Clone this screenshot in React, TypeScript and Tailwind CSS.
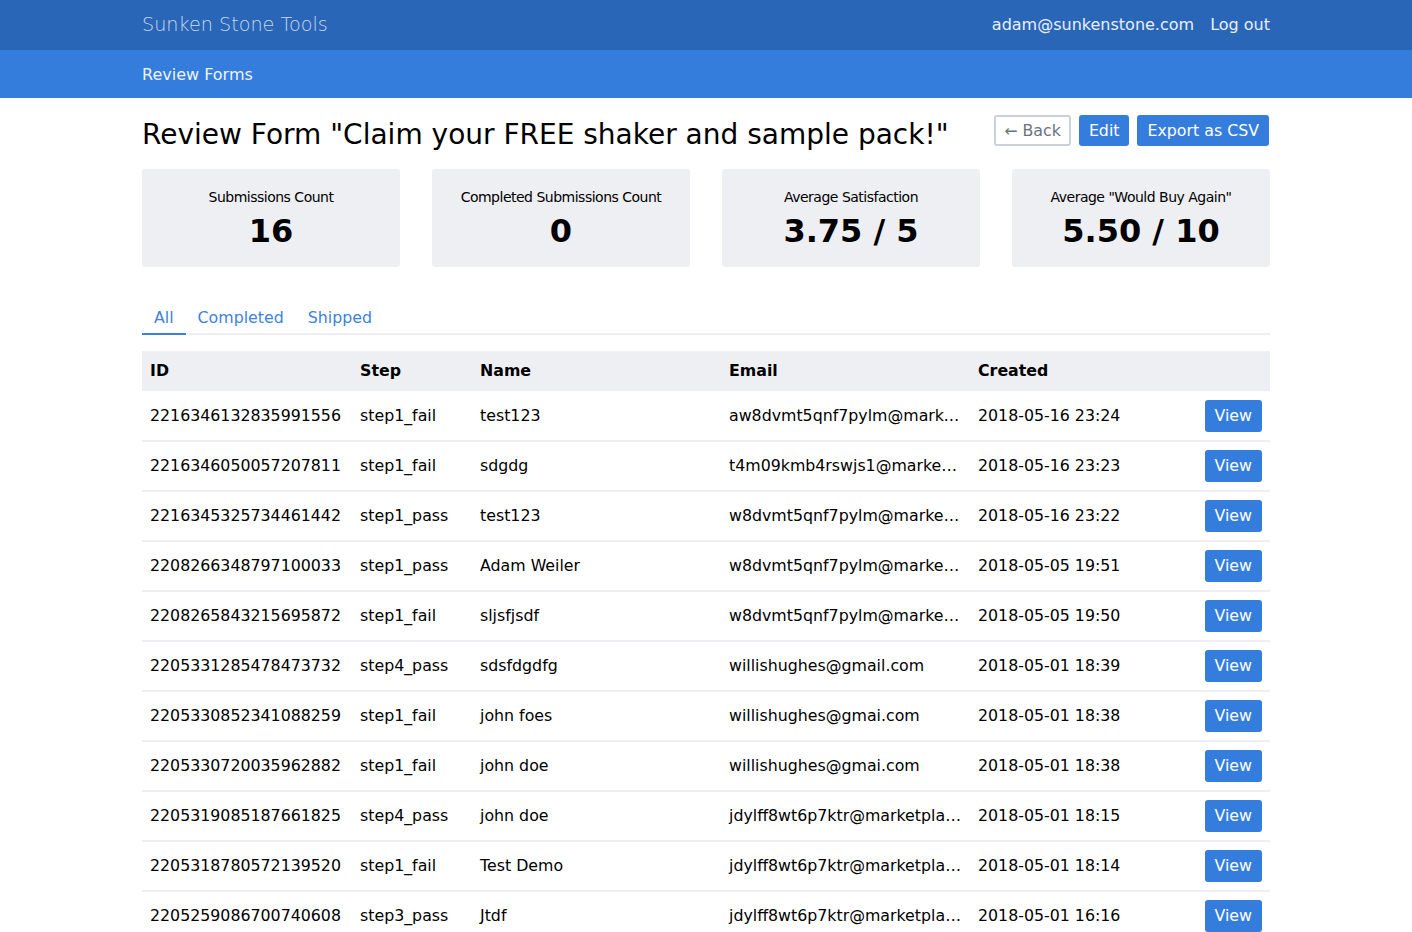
import React from "react";

const rows = [
  ["2216346132835991556", "step1_fail", "test123", "aw8dvmt5qnf7pylm@marketplace.amazon.com", "2018-05-16 23:24"],
  ["2216346050057207811", "step1_fail", "sdgdg", "t4m09kmb4rswjs1@marketplace.amazon.com", "2018-05-16 23:23"],
  ["2216345325734461442", "step1_pass", "test123", "w8dvmt5qnf7pylm@marketplace.amazon.com", "2018-05-16 23:22"],
  ["2208266348797100033", "step1_pass", "Adam Weiler", "w8dvmt5qnf7pylm@marketplace.amazon.com", "2018-05-05 19:51"],
  ["2208265843215695872", "step1_fail", "sljsfjsdf", "w8dvmt5qnf7pylm@marketplace.amazon.com", "2018-05-05 19:50"],
  ["2205331285478473732", "step4_pass", "sdsfdgdfg", "willishughes@gmail.com", "2018-05-01 18:39"],
  ["2205330852341088259", "step1_fail", "john foes", "willishughes@gmai.com", "2018-05-01 18:38"],
  ["2205330720035962882", "step1_fail", "john doe", "willishughes@gmai.com", "2018-05-01 18:38"],
  ["2205319085187661825", "step4_pass", "john doe", "jdylff8wt6p7ktr@marketplace.amazon.com", "2018-05-01 18:15"],
  ["2205318780572139520", "step1_fail", "Test Demo", "jdylff8wt6p7ktr@marketplace.amazon.com", "2018-05-01 18:14"],
  ["2205259086700740608", "step3_pass", "Jtdf", "jdylff8wt6p7ktr@marketplace.amazon.com", "2018-05-01 16:16"],
];

const stats = [
  ["Submissions Count", "16"],
  ["Completed Submissions Count", "0"],
  ["Average Satisfaction", "3.75 / 5"],
  ['Average "Would Buy Again"', "5.50 / 10"],
];

export default function App() {
  return (
    <div className="min-h-screen bg-white text-black" style={{ fontFamily: '"DejaVu Sans", sans-serif' }}>
      <div className="bg-[#2a66b8] h-[50px]">
        <div className="w-[1128px] mx-auto h-full flex items-center justify-between">
          <div className="text-[19.2px] text-[#c6d7ef] font-light">Sunken Stone Tools</div>
          <div className="flex items-center gap-4 text-[16px] text-[#e9eff9]">
            <span>adam@sunkenstone.com</span>
            <span>Log out</span>
          </div>
        </div>
      </div>
      <div className="bg-[#347ddd] h-[48px]">
        <div className="w-[1128px] mx-auto h-full flex items-center text-[16px] text-[#eef3fb] pt-[2px]">Review Forms</div>
      </div>
      <div className="w-[1128px] mx-auto">
        <div className="flex items-start justify-between pt-[19px]">
          <h1 className="text-[28px] leading-[36px]">Review Form "Claim your FREE shaker and sample pack!"</h1>
          <div className="flex gap-[8px] mt-[-2px] mr-[1px]">
            <button className="h-[31px] px-[8px] border-2 border-[#c9d1da] rounded-[3px] text-[#6a7480] text-[15.8px]">← Back</button>
            <button className="h-[31px] px-[10px] rounded-[3px] bg-[#357ddd] text-white text-[15.8px]">Edit</button>
            <button className="h-[31px] px-[10px] rounded-[3px] bg-[#357ddd] text-white text-[15.8px]">Export as CSV</button>
          </div>
        </div>
        <div className="grid grid-cols-4 gap-[32px] mt-[16px]">
          {stats.map(([l, v]) => (
            <div key={l} className="bg-[#eeeff3] rounded-[3px] h-[98px] flex flex-col items-center pt-[19px]">
              <div className="text-[14px] leading-[18px] tracking-[-0.5px]">{l}</div>
              <div className="text-[32px] leading-[38px] font-bold mt-[6px]">{v}</div>
            </div>
          ))}
        </div>
        <div className="mt-[38px] flex border-b-2 border-[#eeeff3] h-[30px] text-[15.8px]">
          <div className="px-[12px] pt-[1px] text-[#3d82de] border-b-2 border-[#3b80dc] -mb-[2px]">All</div>
          <div className="px-[12px] pt-[1px] text-[#3d82de]">Completed</div>
          <div className="px-[12px] pt-[1px] text-[#3d82de]">Shipped</div>
        </div>
        <table className="w-full mt-[16px] text-[15.8px] table-fixed border-collapse">
          <colgroup>
            <col className="w-[210px]" />
            <col className="w-[120px]" />
            <col className="w-[249px]" />
            <col className="w-[249px]" />
            <col />
            <col className="w-[80px]" />
          </colgroup>
          <thead>
            <tr className="bg-[#eeeff3] h-[40px] font-bold text-left">
              <th className="px-[8px]">ID</th>
              <th className="px-[8px]">Step</th>
              <th className="px-[8px]">Name</th>
              <th className="px-[8px]">Email</th>
              <th className="px-[8px]">Created</th>
              <th className="px-[8px]"></th>
            </tr>
          </thead>
          <tbody>
            {rows.map((r) => (
              <tr key={r[0]} className="h-[50px] border-b-2 border-[#eeeff3]">
                <td className="px-[8px] whitespace-nowrap">{r[0]}</td>
                <td className="px-[8px] whitespace-nowrap">{r[1]}</td>
                <td className="px-[8px] whitespace-nowrap">{r[2]}</td>
                <td className="px-[8px] whitespace-nowrap overflow-hidden text-ellipsis">{r[3]}</td>
                <td className="px-[8px] whitespace-nowrap">{r[4]}</td>
                <td className="px-[8px] text-right">
                  <button className="h-[32px] px-[10px] rounded-[3px] bg-[#357ddd] text-white text-[15.8px] align-middle">View</button>
                </td>
              </tr>
            ))}
          </tbody>
        </table>
      </div>
    </div>
  );
}
